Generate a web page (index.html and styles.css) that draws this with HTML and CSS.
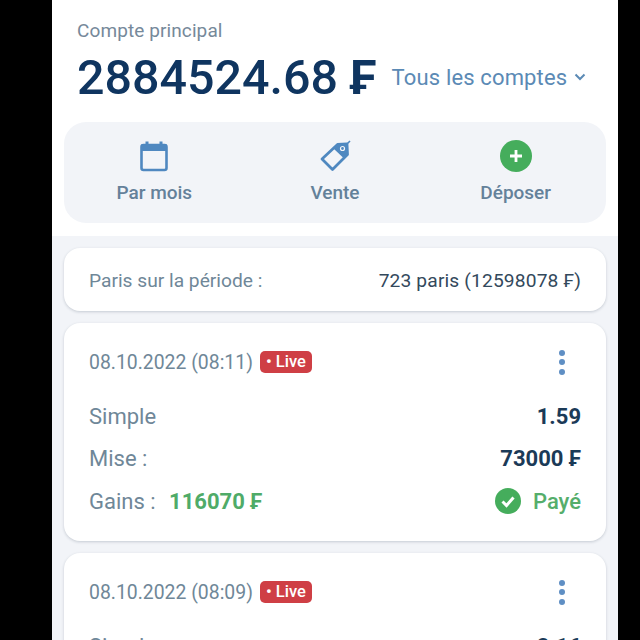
FILE: index.html
```html
<!DOCTYPE html>
<html lang="fr">
<head>
    <meta charset="UTF-8">
    <meta name="viewport" content="width=device-width, initial-scale=1.0">
    <title>Historique des paris</title>
    <link rel="stylesheet" href="styles.css">
</head>
<body>
    <div class="app">
        <header class="compte">
            <p class="compte-label">Compte principal</p>
            <div class="compte-ligne">
                <span class="solde">2884524.68 <span class="devise">₣</span></span>
                <span class="tous">Tous les comptes
                    <svg class="chevron" viewBox="0 0 12 8" width="12" height="8"><path d="M1.5 1.5 6 6l4.5-4.5" fill="none" stroke="#5b8ab5" stroke-width="2"/></svg>
                </span>
            </div>
        </header>

        <nav class="actions">
            <div class="action">
                <svg class="action-icon" viewBox="0 0 32 32" width="32" height="32">
                    <rect x="3.5" y="5" width="25" height="25" rx="2" fill="none" stroke="#4f88c0" stroke-width="2.6"/>
                    <rect x="3" y="4" width="26" height="7" rx="1.5" fill="#4f88c0"/>
                    <rect x="7.5" y="1.5" width="3" height="4" fill="#4f88c0"/>
                    <rect x="21.5" y="1.5" width="3" height="4" fill="#4f88c0"/>
                </svg>
                <span>Par mois</span>
            </div>
            <div class="action">
                <svg class="action-icon" viewBox="0 0 32 32" width="32" height="32">
                    <path d="M18.5 4.5 28 4l.5 10.5L13.5 29.5 3 19z" fill="none" stroke="#4f88c0" stroke-width="2.8" stroke-linejoin="round"/>
                    <path d="M18 4.5 28 3.5l1 11-4 4-10.5-10z" fill="#4f88c0"/>
                    <circle cx="23.5" cy="8.5" r="2" fill="none" stroke="#f2f4f8" stroke-width="1.2"/>
                    <path d="M28 4l3-3" stroke="#4f88c0" stroke-width="1.6"/>
                </svg>
                <span>Vente</span>
            </div>
            <div class="action">
                <svg class="action-icon" viewBox="0 0 32 32" width="32" height="32">
                    <circle cx="16" cy="16" r="16" fill="#45ad5c"/>
                    <path d="M16 10v12M10 16h12" stroke="#fff" stroke-width="2.8"/>
                </svg>
                <span>Déposer</span>
            </div>
        </nav>

        <main class="liste">
            <section class="card resume">
                <span>Paris sur la période :</span>
                <span class="resume-valeur">723 paris (12598078 ₣)</span>
            </section>

            <section class="card pari">
                <div class="pari-haut">
                    <span class="date">08.10.2022 (08:11)</span>
                    <span class="live">• Live</span>
                    <span class="menu"><i></i><i></i><i></i></span>
                </div>
                <div class="ligne"><span>Simple</span><b>1.59</b></div>
                <div class="ligne"><span>Mise :</span><b>73000 ₣</b></div>
                <div class="ligne">
                    <span>Gains : <b class="gain">116070 ₣</b></span>
                    <span class="paye">
                        <svg viewBox="0 0 26 26" width="26" height="26">
                            <circle cx="13" cy="13" r="13" fill="#45ad5c"/>
                            <path d="M7.5 13.5l4 4 7-8" fill="none" stroke="#fff" stroke-width="3"/>
                        </svg>
                        Payé
                    </span>
                </div>
            </section>

            <section class="card pari">
                <div class="pari-haut">
                    <span class="date">08.10.2022 (08:09)</span>
                    <span class="live">• Live</span>
                    <span class="menu"><i></i><i></i><i></i></span>
                </div>
                <div class="ligne"><span>Simple</span><b>2.16</b></div>
            </section>
        </main>
    </div>
</body>
</html>
```

FILE: styles.css
```css
* {
    box-sizing: border-box;
    margin: 0;
    padding: 0;
}

html, body {
    height: 100%;
    overflow: hidden;
    background-color: #000;
}

body {
    font-family: 'Roboto', sans-serif;
    color: #6f8798;
}

.app {
    width: 566px;
    height: 640px;
    margin-left: 52px;
    background-color: #fff;
    overflow: hidden;
}

/* Bloc du solde */
.compte {
    padding: 20px 25px 0;
}

.compte-label {
    font-size: 19px;
    line-height: 22px;
    letter-spacing: 0.1px;
    color: #76899a;
}

.compte-ligne {
    display: flex;
    align-items: center;
    margin-top: 10px;
    height: 50px;
}

.solde {
    font-size: 48.4px;
    font-weight: 500;
    color: #0f3560;
    white-space: nowrap;
}

.devise {
    font-weight: 700;
}

.tous {
    display: flex;
    align-items: center;
    gap: 7px;
    margin-left: 15px;
    font-size: 22px;
    letter-spacing: 0.15px;
    color: #5b8ab5;
    white-space: nowrap;
}

/* Boutons d'action */
.actions {
    display: grid;
    grid-template-columns: repeat(3, 1fr);
    height: 101px;
    margin: 20px 12px 0;
    padding-top: 18px;
    background-color: #f2f4f8;
    border-radius: 22px;
}

.action {
    display: flex;
    flex-direction: column;
    align-items: center;
    gap: 9px;
    font-size: 19px;
    font-weight: 500;
    color: #64819a;
}

.action-icon {
    display: block;
}

/* Liste des paris */
.liste {
    margin-top: 13px;
    padding: 12px 12px 0;
    height: 420px;
    background-color: #f2f4f8;
}

.card {
    background-color: #fff;
    border-radius: 16px;
    box-shadow: 0 1px 3px rgba(40, 60, 80, 0.22);
    padding: 0 25px;
    margin-bottom: 12px;
}

.resume {
    display: flex;
    align-items: center;
    justify-content: space-between;
    height: 63px;
    padding-top: 2px;
    font-size: 19.2px;
    color: #6f8798;
}

.resume-valeur {
    letter-spacing: 0.15px;
    color: #33495c;
}

.pari {
    height: 218px;
    padding-top: 24px;
}

.pari-haut {
    display: flex;
    align-items: center;
    height: 30px;
    margin-bottom: 18px;
}

.date {
    font-size: 19.4px;
    color: #6f8798;
}

.live {
    margin-left: 7px;
    padding: 0 6px;
    height: 22px;
    line-height: 22px;
    border-radius: 5px;
    background-color: #cf3f45;
    color: #fff;
    font-size: 16.5px;
    font-weight: 500;
}

.menu {
    display: flex;
    flex-direction: column;
    gap: 3.5px;
    margin-left: auto;
    margin-right: 16px;
}

.menu i {
    display: block;
    width: 6px;
    height: 6px;
    border-radius: 50%;
    background-color: #5f8fc4;
}

.ligne {
    display: flex;
    align-items: center;
    justify-content: space-between;
    height: 42.5px;
    font-size: 22px;
    color: #6f8798;
}

.ligne b {
    font-weight: 700;
    color: #1b3a57;
}

.ligne b.gain {
    margin-left: 8px;
    color: #4fab68;
}

.paye {
    display: flex;
    align-items: center;
    gap: 12px;
    font-weight: 500;
    color: #55ae6b;
}
```
